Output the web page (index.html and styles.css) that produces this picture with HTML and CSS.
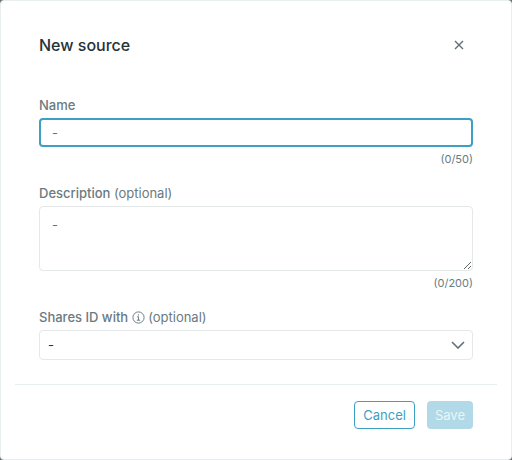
FILE: index.html
```html
<!DOCTYPE html>
<html lang="en">
<head>
    <meta charset="UTF-8">
    <title>New source</title>
    <link rel="stylesheet" href="styles.css">
</head>

<body>

<form class="modal">
    <header class="modal-header">
        <h1>New source</h1>
        <button type="button" class="close" aria-label="Close">
            <svg width="10" height="10" viewBox="0 0 10 10">
                <path d="M1 1l8 8M9 1l-8 8"/>
            </svg>
        </button>
    </header>

    <div class="modal-body">
        <div class="field">
            <label for="name">Name</label>
            <input type="text" id="name" class="control focused" placeholder="-" maxlength="50">
            <span class="counter">(0/50)</span>
        </div>
        <div class="field">
            <label for="description">Description <span class="optional">(optional)</span></label>
            <textarea id="description" class="control" placeholder="-" maxlength="200"></textarea>
            <span class="counter">(0/200)</span>
        </div>
        <div class="field">
            <label for="shares">Shares ID with
                <svg class="info" width="13" height="13" viewBox="0 0 13 13">
                    <circle cx="6.5" cy="6.5" r="5.6"/>
                    <path d="M5 5.8h1.5v3.4M4.8 9.2h3.4M6.5 3.3v1.2"/>
                </svg>
                <span class="optional">(optional)</span></label>
            <div class="select">
                <select id="shares" class="control">
                    <option>-</option>
                </select>
                <svg class="arrow" width="14" height="8" viewBox="0 0 14 8">
                    <path d="M1 1l6 6 6-6"/>
                </svg>
            </div>
        </div>
    </div>

    <footer class="modal-footer">
        <button type="button" class="btn">Cancel</button>
        <button type="submit" class="btn primary" disabled>Save</button>
    </footer>
</form>

</body>

</html>
```
FILE: styles.css
```css
* {
    box-sizing: border-box;
}

body {
    margin: 0;
    background: #6f7375;
    font-family: Inter, "Liberation Sans", sans-serif;
    font-size: 13px;
    line-height: 16px;
    color: #6a7a80;
}

.modal {
    min-height: 100vh;
    padding: 31px 14px 30px;
    background: white;
    border: 1px solid #e9eeef;
    border-radius: 4px;
}

.modal-header {
    display: flex;
    align-items: center;
    justify-content: space-between;
    padding: 0 24px;
}

.modal-header h1 {
    margin: 0;
    font-size: 16px;
    font-weight: 500;
    line-height: 24px;
    color: #253238;
}

.close {
    display: flex;
    padding: 8px 9px;
    border: none;
    background: none;
    cursor: pointer;
}

svg {
    fill: none;
    stroke: #5f7078;
}

.close svg {
    stroke-width: 1.4;
}

.modal-body {
    display: flex;
    flex-direction: column;
    gap: 19px;
    padding: 39px 24px 24px;
}

.field {
    display: flex;
    flex-direction: column;
}

.field label {
    margin-bottom: 5px;
    font-weight: 500;
}

.optional {
    font-weight: 400;
}

.info {
    vertical-align: -2px;
    stroke-width: 0.9;
}

.control {
    width: 100%;
    height: 29px;
    padding: 0 12px;
    border: 1px solid #e4e8e9;
    border-radius: 4px;
    outline: none;
    background: white;
    font: inherit;
    color: #253238;
}

.control::placeholder {
    color: #6a7578;
}

.control.focused {
    padding: 0 11px;
    border: 2px solid #3d9fc1;
}

textarea.control {
    display: block;
    height: 65px;
    padding: 10px 12px;
    resize: vertical;
}

.counter {
    margin-top: 5px;
    font-size: 11px;
    line-height: 14px;
    text-align: right;
}

.select {
    position: relative;
}

.select .control {
    display: block;
    height: 30px;
    padding: 0 8px;
    appearance: none;
}

.arrow {
    position: absolute;
    top: 11px;
    right: 8px;
    stroke-width: 1.6;
    pointer-events: none;
}

.modal-footer {
    display: flex;
    justify-content: flex-end;
    gap: 12px;
    padding: 16px 24px 0;
    border-top: 1px solid #e9eeef;
}

.btn {
    height: 28px;
    padding: 0 8px;
    border: 1px solid #3d9fc1;
    border-radius: 4px;
    background: white;
    font: inherit;
    color: #3d9fc1;
    cursor: pointer;
}

.btn.primary {
    border: none;
    background: #b1d9e7;
    color: #e9f5f9;
    cursor: default;
}
```
